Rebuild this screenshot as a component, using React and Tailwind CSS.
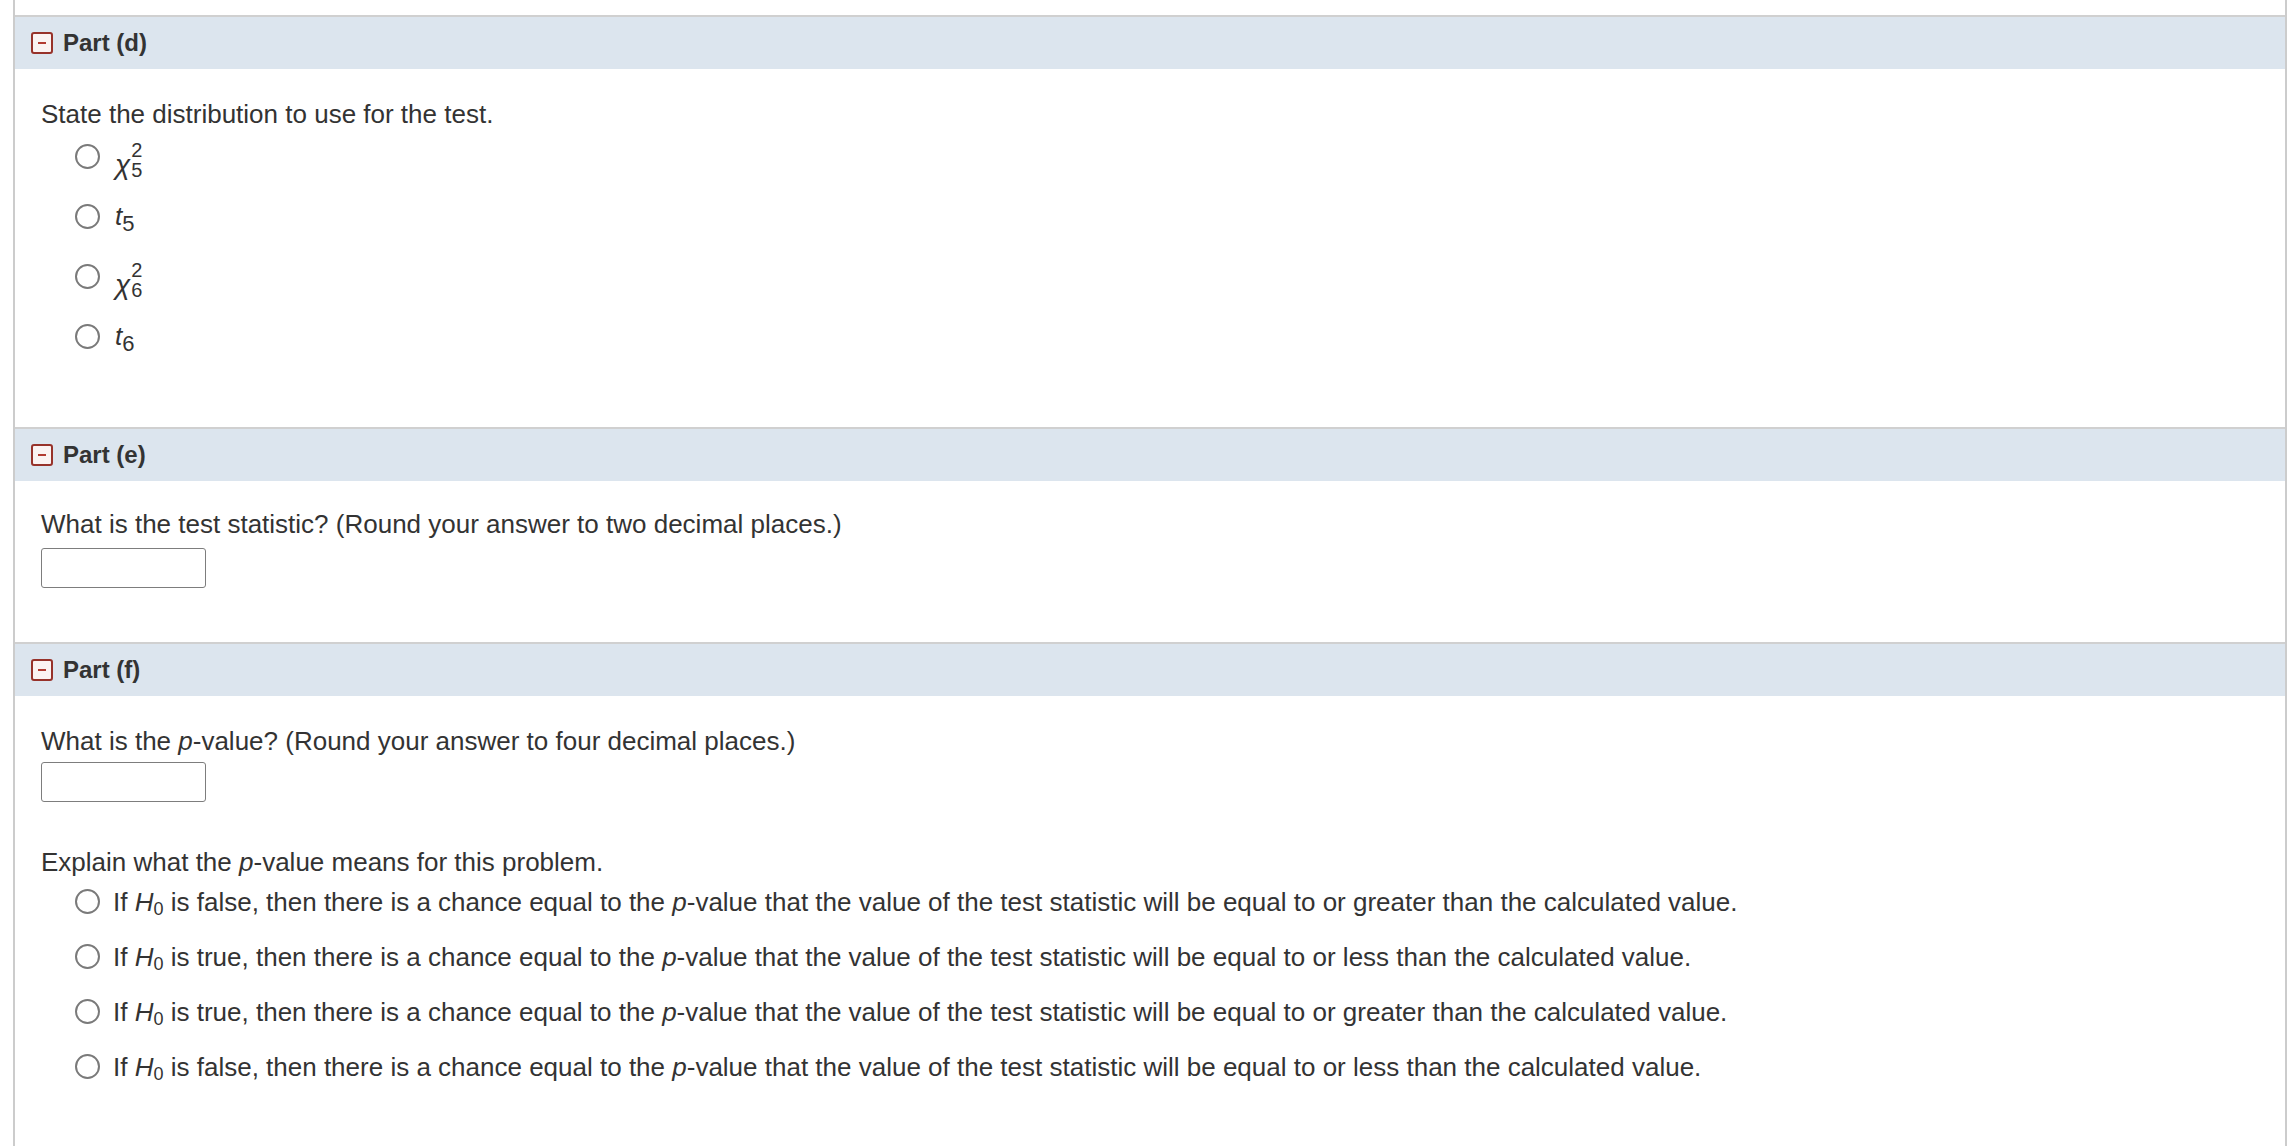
import React from 'react'

const font = { fontFamily: '"Liberation Sans", Arial, sans-serif' }

const CollapseIcon = () => (
  <span className="w-[22px] h-[22px] rounded-[3px] border-2 border-[#97322a] bg-[#fbf3f2] flex items-center justify-center shrink-0">
    <span className="w-[8px] h-[2px] bg-[#b23b31]" />
  </span>
)

const PartHeader = ({ label }) => (
  <div className="h-[54px] border-t-2 border-[#d0d0d0] bg-[#dce5ee] flex items-center pl-[16px] gap-[10px]">
    <CollapseIcon />
    <span className="text-[24px] leading-[24px] font-bold text-[#333333]">{label}</span>
  </div>
)

const Radio = () => (
  <span className="w-[25px] h-[25px] rounded-full border-[2px] border-[#7a7a7a] bg-white shrink-0" />
)

const Chi = ({ df }) => (
  <span className="inline-flex items-end">
    <span className="italic text-[28px] leading-[22px]">χ</span>
    <span className="inline-flex flex-col text-[20px] leading-[20px] ml-[1px] translate-y-[4px]">
      <span>2</span>
      <span>{df}</span>
    </span>
  </span>
)

const T = ({ df }) => (
  <span>
    <span className="italic">t</span>
    <sub className="text-[22px] not-italic">{df}</sub>
  </span>
)

const H0 = () => (
  <span>
    <span className="italic">H</span>
    <sub className="text-[18px]">0</sub>
  </span>
)

const P = () => <span className="italic">p</span>

const AnswerBox = ({ className }) => (
  <div className={`w-[165px] h-[40px] border-[1.5px] border-[#7d7d7d] rounded-[3px] bg-white ${className}`} />
)

const pOptions = [
  ['false', 'greater'],
  ['true', 'less'],
  ['true', 'greater'],
  ['false', 'less'],
]

export default function App() {
  return (
    <div className="min-h-screen bg-white pl-[13px] pr-[7px]" style={font}>
      <div className="min-h-screen border-x-2 border-[#cccccc] text-[#333333] text-[26px] leading-[24px]">
        <div className="h-[15px]" />

        {/* Part (d) */}
        <PartHeader label="Part (d)" />
        <div className="pl-[26px] pt-[33px] pb-[61px]">
          <p>State the distribution to use for the test.</p>
          <div className="pl-[34px]">
            {[<Chi df={5} />, <T df={5} />, <Chi df={6} />, <T df={6} />].map((item, i) => (
              <div key={i} className="h-[60px] flex items-center gap-[15px]">
                <Radio />
                {item}
              </div>
            ))}
          </div>
        </div>

        {/* Part (e) */}
        <PartHeader label="Part (e)" />
        <div className="pl-[26px] pt-[31px] pb-[54px]">
          <p>What is the test statistic? (Round your answer to two decimal places.)</p>
          <AnswerBox className="mt-[12px]" />
        </div>

        {/* Part (f) */}
        <PartHeader label="Part (f)" />
        <div className="pl-[26px] pt-[33px] pb-[40px]">
          <p>
            What is the <P />-value? (Round your answer to four decimal places.)
          </p>
          <AnswerBox className="mt-[9px]" />
          <p className="mt-[48px]">
            Explain what the <P />-value means for this problem.
          </p>
          <div className="pl-[34px]">
            {pOptions.map(([truth, dir], i) => (
              <div key={i} className="h-[55px] flex items-center gap-[13px]">
                <Radio />
                <span>
                  If <H0 /> is {truth}, then there is a chance equal to the <P />-value that the value of the test
                  statistic will be equal to or {dir} than the calculated value.
                </span>
              </div>
            ))}
          </div>
        </div>
      </div>
    </div>
  )
}
